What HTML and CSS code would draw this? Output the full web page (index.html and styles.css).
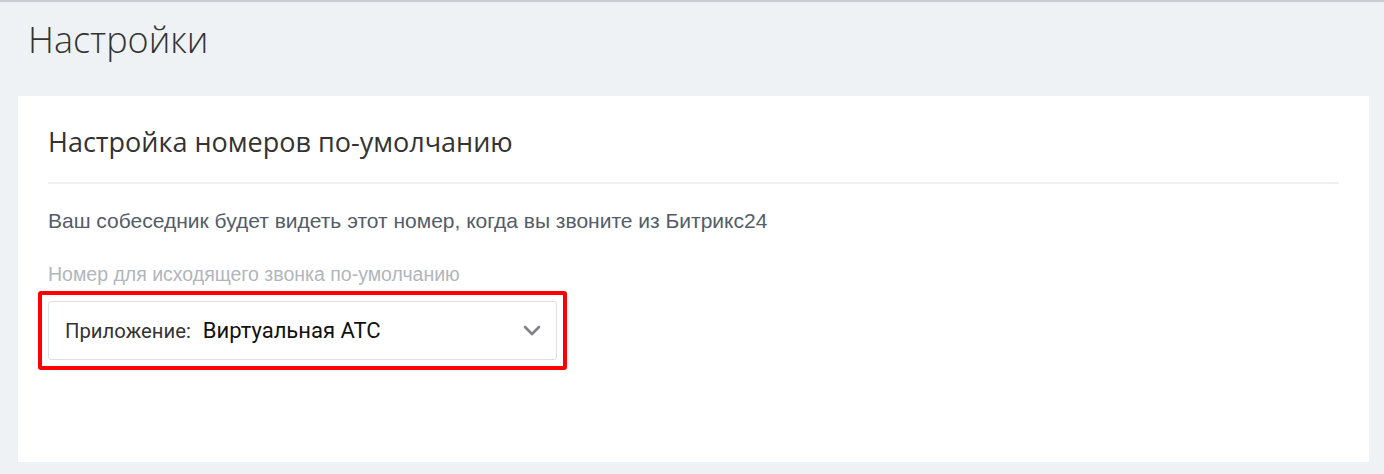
FILE: index.html
```html
<!DOCTYPE html>
<html lang="ru">
<head>
<meta charset="utf-8">
<link rel="stylesheet" href="styles.css">
</head>
<body>
<div class="page">
  <h1 class="page-title">Настройки</h1>
  <div class="card">
    <h2 class="card-title">Настройка номеров по-умолчанию</h2>
    <div class="divider"></div>
    <p class="desc">Ваш собеседник будет видеть этот номер, когда вы звоните из Битрикс24</p>
    <div class="label">Номер для исходящего звонка по-умолчанию</div>
    <div class="highlight">
      <div class="select">
        <span class="sel-prefix">Приложение:</span>
        <span class="sel-value">Виртуальная АТС</span>
        <svg class="chev" width="18" height="11" viewBox="0 0 18 11"><path d="M2 2 L9 9 L16 2" fill="none" stroke="#7d828b" stroke-width="2.6" stroke-linecap="round" stroke-linejoin="round"/></svg>
      </div>
    </div>
  </div>
</div>
</body>
</html>
```
FILE: styles.css
```css
html, body {
  margin: 0;
  padding: 0;
}
body {
  background: #eef2f4;
  width: 1384px;
  height: 474px;
  overflow: hidden;
  border-top: 2px solid #c9cdd1;
  box-sizing: border-box;
}
.page {
  padding: 0 15px 0 18px;
}
.page-title {
  margin: 0;
  font-family: "Open Sans", sans-serif;
  font-weight: 300;
  font-size: 36px;
  line-height: 40px;
  color: #333;
  padding: 18px 0 0 10px;
  height: 94px;
  box-sizing: border-box;
}
.card {
  background: #fff;
  height: 366px;
  padding: 28px 30px 0 30px;
  box-sizing: border-box;
}
.card-title {
  margin: 0;
  font-family: "Open Sans", sans-serif;
  font-weight: 400;
  font-size: 27px;
  line-height: 36px;
  color: #333;
}
.divider {
  height: 2px;
  background: #eef0f2;
  margin-top: 22px;
}
.desc {
  margin: 25px 0 0 0;
  font-family: "Liberation Sans", Arial, sans-serif;
  font-size: 21px;
  line-height: 24px;
  color: #535c69;
}
.label {
  margin-top: 30px;
  font-family: "Liberation Sans", Arial, sans-serif;
  font-size: 19.5px;
  line-height: 22px;
  color: #b1b6bc;
}
.highlight {
  margin: 6px 0 0 -10px;
  width: 529px;
  box-sizing: border-box;
  border: 4px solid #ff0000;
  border-radius: 3px;
  padding: 6px;
}
.select {
  height: 59px;
  border: 1px solid #dcdfe3;
  border-radius: 3px;
  box-sizing: border-box;
  display: flex;
  align-items: center;
  padding: 0 15px 0 16px;
  font-family: Roboto, sans-serif;
}
.sel-prefix {
  color: #333;
  font-size: 20.3px;
}
.sel-value {
  color: #111;
  font-size: 22px;
  margin-left: 12px;
}
.chev {
  margin-left: auto;
}
```
